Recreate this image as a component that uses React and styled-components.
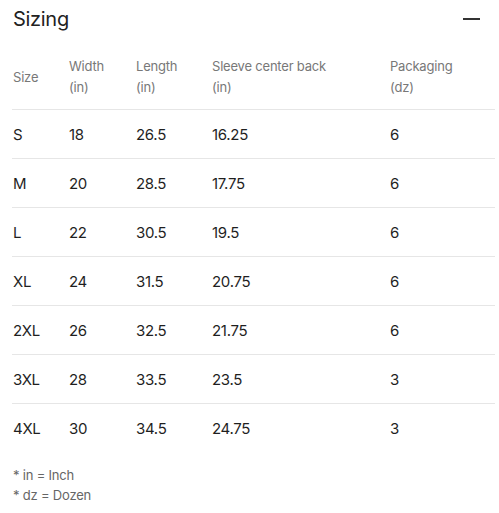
import React from "react";
import styled, { createGlobalStyle } from "styled-components";

const Global = createGlobalStyle`
  body {
    margin: 0;
    background: #fff;
    font-family: Inter, "Liberation Sans", sans-serif;
  }
`;

const Wrap = styled.div`
  width: 499px;
  padding: 0 4px 0 12px;
  box-sizing: border-box;
`;

const Head = styled.div`
  display: flex;
  align-items: center;
  justify-content: space-between;
  height: 38px;
  padding-left: 1px;
`;

const Title = styled.h2`
  margin: 0;
  font-size: 20px;
  font-weight: 400;
  color: #222;
  letter-spacing: -0.3px;
`;

const Minus = styled.span`
  display: block;
  width: 17px;
  height: 2px;
  background: #333;
  margin-right: 15px;
`;

const Table = styled.table`
  width: 100%;
  border-collapse: collapse;
  margin-top: 11px;
  table-layout: fixed;
`;

const Th = styled.th`
  width: ${p => p.w - 1}px;
  text-align: left;
  font-weight: 400;
  font-size: 13px;
  line-height: 21px;
  color: #787878;
  padding: 0 0 4px 1px;
  height: 56px;
  vertical-align: middle;
  border-bottom: 1px solid #e6e6e6;
  letter-spacing: -0.2px;
`;

const Td = styled.td`
  font-size: 15px;
  color: #1f1f1f;
  height: 48px;
  padding: 0 0 0 1px;
  border-bottom: ${p => (p.last ? "none" : "1px solid #e6e6e6")};
  letter-spacing: -0.3px;
`;

const Notes = styled.div`
  margin-top: 13px;
  padding-left: 1px;
  font-size: 13px;
  line-height: 20px;
  color: #666;
  letter-spacing: -0.2px;
`;

const cols = [
  { label: "Size", w: 56 },
  { label: ["Width", "(in)"], w: 67 },
  { label: ["Length", "(in)"], w: 76 },
  { label: ["Sleeve center back", "(in)"], w: 178 },
  { label: ["Packaging", "(dz)"], w: 106 },
];

const rows = [
  ["S", "18", "26.5", "16.25", "6"],
  ["M", "20", "28.5", "17.75", "6"],
  ["L", "22", "30.5", "19.5", "6"],
  ["XL", "24", "31.5", "20.75", "6"],
  ["2XL", "26", "32.5", "21.75", "6"],
  ["3XL", "28", "33.5", "23.5", "3"],
  ["4XL", "30", "34.5", "24.75", "3"],
];

export default function App() {
  return (
    <Wrap>
      <Global />
      <Head>
        <Title>Sizing</Title>
        <Minus />
      </Head>
      <Table>
        <thead>
          <tr>
            {cols.map((c, i) => (
              <Th key={i} w={c.w}>
                {Array.isArray(c.label) ? (
                  <>
                    {c.label[0]}
                    <br />
                    {c.label[1]}
                  </>
                ) : (
                  c.label
                )}
              </Th>
            ))}
          </tr>
        </thead>
        <tbody>
          {rows.map((r, i) => (
            <tr key={r[0]}>
              {r.map((v, j) => (
                <Td key={j} last={i === rows.length - 1}>
                  {v}
                </Td>
              ))}
            </tr>
          ))}
        </tbody>
      </Table>
      <Notes>
        * in = Inch
        <br />* dz = Dozen
      </Notes>
    </Wrap>
  );
}
